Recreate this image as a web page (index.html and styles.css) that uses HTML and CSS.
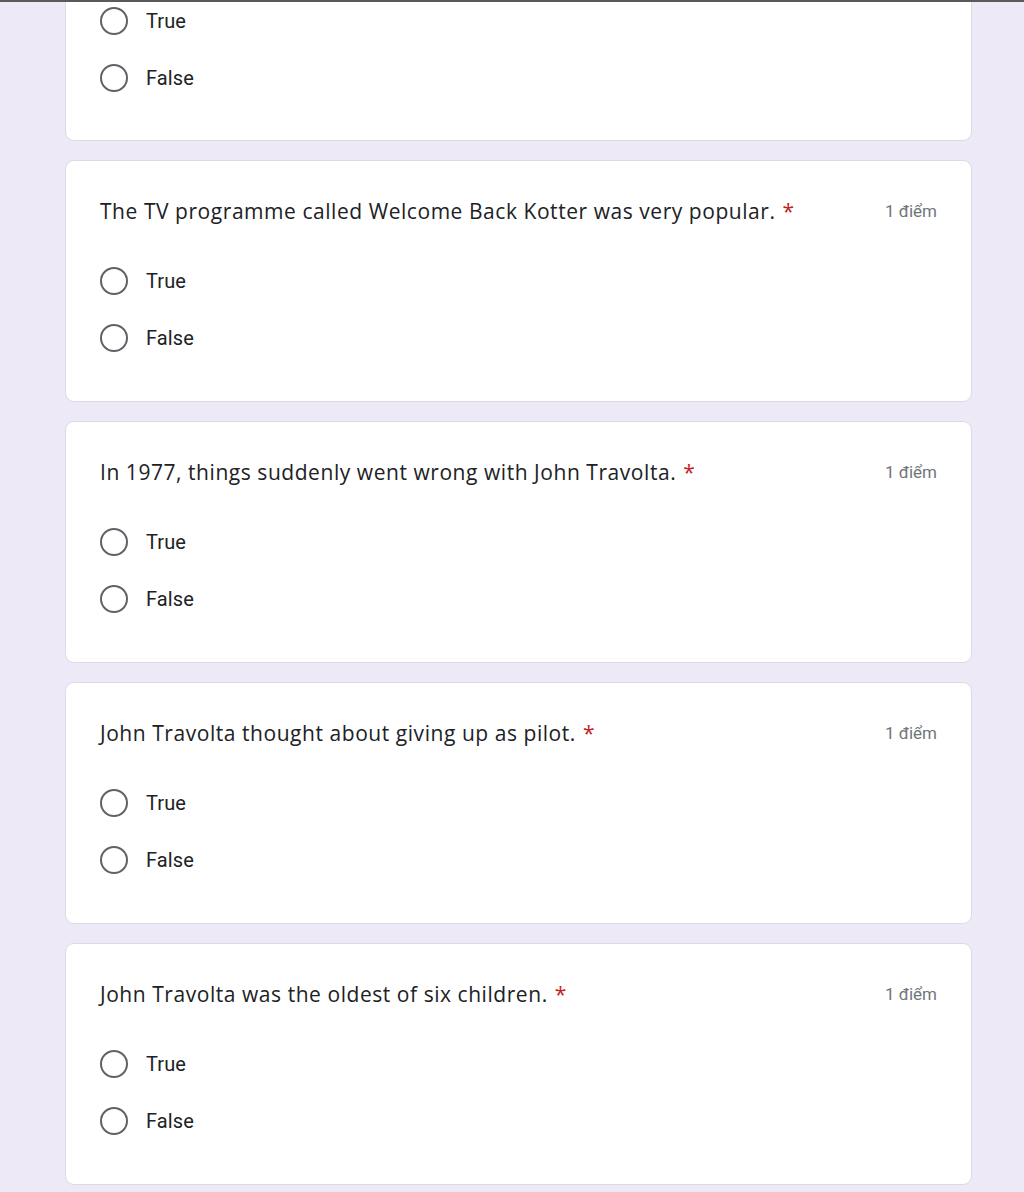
FILE: index.html
```html
<!DOCTYPE html>
<html lang="vi">
<head>
<meta charset="utf-8">
<title>Form</title>
<link rel="stylesheet" href="styles.css">
</head>
<body>
<div class="topline"></div>
<main class="form">
  <section class="card card--cut">
    <div class="options">
      <div class="option"><span class="radio"></span><span class="label">True</span></div>
      <div class="option"><span class="radio"></span><span class="label">False</span></div>
    </div>
  </section>

  <section class="card">
    <div class="head">
      <div class="question">The TV programme called Welcome Back Kotter was very popular.<span class="req">*</span></div>
      <div class="points">1 điểm</div>
    </div>
    <div class="options">
      <div class="option"><span class="radio"></span><span class="label">True</span></div>
      <div class="option"><span class="radio"></span><span class="label">False</span></div>
    </div>
  </section>

  <section class="card">
    <div class="head">
      <div class="question">In 1977, things suddenly went wrong with John Travolta.<span class="req">*</span></div>
      <div class="points">1 điểm</div>
    </div>
    <div class="options">
      <div class="option"><span class="radio"></span><span class="label">True</span></div>
      <div class="option"><span class="radio"></span><span class="label">False</span></div>
    </div>
  </section>

  <section class="card">
    <div class="head">
      <div class="question">John Travolta thought about giving up as pilot.<span class="req">*</span></div>
      <div class="points">1 điểm</div>
    </div>
    <div class="options">
      <div class="option"><span class="radio"></span><span class="label">True</span></div>
      <div class="option"><span class="radio"></span><span class="label">False</span></div>
    </div>
  </section>

  <section class="card">
    <div class="head">
      <div class="question">John Travolta was the oldest of six children.<span class="req">*</span></div>
      <div class="points">1 điểm</div>
    </div>
    <div class="options">
      <div class="option"><span class="radio"></span><span class="label">True</span></div>
      <div class="option"><span class="radio"></span><span class="label">False</span></div>
    </div>
  </section>
</main>
</body>
</html>
```

FILE: styles.css
```css
html, body {
  margin: 0;
  padding: 0;
}
body {
  background: #ede9f7;
  font-family: Roboto, "Liberation Sans", sans-serif;
  color: #202124;
  width: 1024px;
  height: 1192px;
  overflow: hidden;
  position: relative;
}
.topline {
  position: absolute;
  top: 0;
  left: 0;
  right: 0;
  height: 2px;
  background: #5a5a5c;
}
.form {
  display: flex;
  flex-direction: column;
  gap: 19px;
  padding-left: 65px;
  width: 907px;
}
.card {
  background: #fff;
  border: 1px solid #dcdae2;
  border-radius: 9px;
  padding: 37px 34px 34px 34px;
  box-sizing: border-box;
  height: 242px;
}
.card--cut {
  border-top: none;
  border-radius: 0 0 9px 9px;
  padding-top: 0;
  height: 141px;
}
.card--cut .options {
  margin-top: -8px;
}
.head {
  display: flex;
  justify-content: space-between;
  align-items: center;
  height: 26px;
}
.question {
  font-family: "Open Sans", "Liberation Sans", sans-serif;
  font-size: 21px;
  line-height: 26px;
  color: #202124;
  letter-spacing: 0.55px;
}
.req {
  color: #c5221f;
  margin-left: 7px;
  letter-spacing: 0;
}
.points {
  font-size: 17px;
  color: #70757a;
}
.options {
  display: flex;
  flex-direction: column;
  margin-top: 28px;
}
.option {
  display: flex;
  align-items: center;
  height: 57px;
  gap: 18px;
}
.radio {
  width: 28px;
  height: 28px;
  box-sizing: border-box;
  border: 2.5px solid #5f6368;
  border-radius: 50%;
  flex: none;
}
.label {
  font-size: 20px;
  color: #202124;
  letter-spacing: 0.1px;
}
```
